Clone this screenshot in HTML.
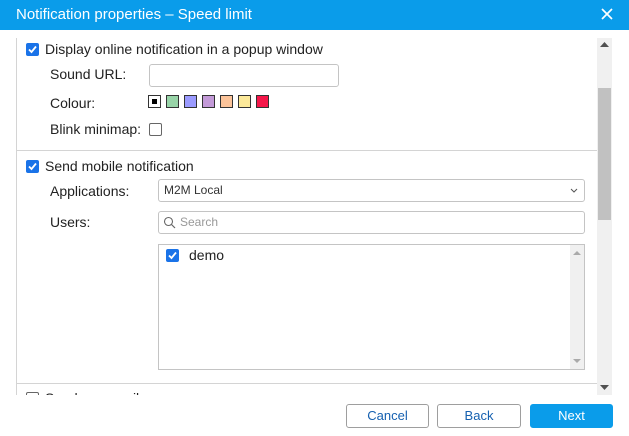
<!DOCTYPE html>
<html><head><style>
*{box-sizing:border-box;margin:0;padding:0}
body{width:629px;height:436px;background:#fff;font-family:"Liberation Sans",Arial,sans-serif;font-size:14px;color:#222;position:relative;overflow:hidden}
.hdr{position:absolute;left:0;top:0;width:629px;height:30px;background:#0a9cea;color:#fff;font-size:15px;line-height:29px;padding-left:16px}
.x{position:absolute;right:14px;top:6px;width:16px;height:16px}
.view{position:absolute;left:16px;top:38px;width:581px;height:357px;overflow:hidden;border-left:1px solid #d4d4d4}
.abs{position:absolute}
.cb{position:absolute;width:13px;height:13px;border-radius:2px;background:#1a73e8}
.cb svg{position:absolute;left:1px;top:1px}
.cbe{position:absolute;width:13px;height:13px;border-radius:2px;border:1px solid #666;background:#fff}
.inp{position:absolute;border:1px solid #c4c4c4;border-radius:3px;background:#fff}
.sw{position:absolute;top:57px;width:13px;height:13px;border:1px solid #333}
.hr{position:absolute;left:0;width:581px;height:1px;background:#d4d4d4}
.sb{position:absolute;left:597px;top:38px;width:15px;height:357px;background:#f0f0f0}
.btn{position:absolute;top:404px;height:24px;border:1px solid #9e9e9e;border-radius:3px;background:#fff;color:#1560b0;font-size:13px;text-align:center;line-height:22px}
</style></head><body>
<div class="hdr">Notification properties – Speed limit
<svg class="x" viewBox="0 0 16 16"><path d="M3 3L13 13M13 3L3 13" stroke="#fff" stroke-width="1.7"/></svg></div>
<div class="view">
 <div class="cb" style="left:9px;top:5px"><svg width="11" height="11" viewBox="0 0 11 11"><path d="M2 5.5L4.5 8L9 2.5" stroke="#fff" stroke-width="1.8" fill="none"/></svg></div>
 <div class="abs" style="left:28px;top:3px">Display online notification in a popup window</div>
 <div class="abs" style="left:33px;top:28px">Sound URL:</div>
 <div class="inp" style="left:132px;top:26px;width:190px;height:23px"></div>
 <div class="abs" style="left:33px;top:57px">Colour:</div>
 <div class="sw" style="left:131px;background:#fff"><div style="position:absolute;left:3px;top:3px;width:5px;height:5px;background:#000"></div></div>
 <div class="sw" style="left:149px;background:#98d4a8"></div>
 <div class="sw" style="left:167px;background:#9b9bff"></div>
 <div class="sw" style="left:185px;background:#c39ad8"></div>
 <div class="sw" style="left:203px;background:#fcc49a"></div>
 <div class="sw" style="left:221px;background:#fce99a"></div>
 <div class="sw" style="left:239px;background:#f5174a"></div>
 <div class="abs" style="left:33px;top:83px">Blink minimap:</div>
 <div class="cbe" style="left:132px;top:85px"></div>
 <div class="hr" style="top:112px"></div>
 <div class="cb" style="left:9px;top:122px"><svg width="11" height="11" viewBox="0 0 11 11"><path d="M2 5.5L4.5 8L9 2.5" stroke="#fff" stroke-width="1.8" fill="none"/></svg></div>
 <div class="abs" style="left:28px;top:120px">Send mobile notification</div>
 <div class="abs" style="left:33px;top:145px">Applications:</div>
 <div class="inp" style="left:141px;top:141px;width:427px;height:23px;font-size:12px;line-height:21px;padding-left:5px;color:#333">M2M Local
  <svg style="position:absolute;right:6px;top:8px" width="8" height="6" viewBox="0 0 8 6"><path d="M1 1L4 4L7 1" stroke="#555" fill="none"/></svg></div>
 <div class="abs" style="left:33px;top:176px">Users:</div>
 <div class="inp" style="left:141px;top:173px;width:427px;height:23px;font-size:12px;line-height:21px;padding-left:21px;color:#999">Search
  <svg style="position:absolute;left:4px;top:4px" width="13" height="13" viewBox="0 0 13 13"><circle cx="5.5" cy="5.5" r="4" stroke="#666" fill="none" stroke-width="1.1"/><path d="M8.5 8.5L12 12" stroke="#666" stroke-width="1.2"/></svg></div>
 <div class="inp" style="left:141px;top:206px;width:427px;height:126px;border-radius:0">
  <div style="position:absolute;right:0;top:0;width:14px;height:124px;background:#f0f0f0"></div>
  <svg style="position:absolute;right:3px;top:5px" width="8" height="5"><path d="M0 5L4 1L8 5Z" fill="#aaa"/></svg>
  <svg style="position:absolute;right:3px;bottom:5px" width="8" height="5"><path d="M0 0L4 4L8 0Z" fill="#aaa"/></svg>
  <div class="cb" style="left:7px;top:4px"><svg width="11" height="11" viewBox="0 0 11 11"><path d="M2 5.5L4.5 8L9 2.5" stroke="#fff" stroke-width="1.8" fill="none"/></svg></div>
  <div class="abs" style="left:30px;top:2px">demo</div>
 </div>
 <div class="hr" style="top:345px"></div>
 <div class="cbe" style="left:9px;top:354px"></div>
 <div class="abs" style="left:28px;top:352px">Send an e-mail</div>
</div>
<div class="sb"><div style="position:absolute;left:1px;top:50px;width:13px;height:132px;background:#c1c1c1"></div>
<svg style="position:absolute;left:3px;top:4px" width="9" height="5"><path d="M0 5L4.5 0L9 5Z" fill="#505050"/></svg>
<svg style="position:absolute;left:3px;bottom:5px" width="9" height="5"><path d="M0 0L4.5 5L9 0Z" fill="#505050"/></svg></div>
<div class="btn" style="left:346px;width:83px">Cancel</div>
<div class="btn" style="left:437px;width:84px">Back</div>
<div class="btn" style="left:530px;width:83px;background:#0a9cea;border-color:#0a9cea;color:#fff">Next</div>
</body></html>
